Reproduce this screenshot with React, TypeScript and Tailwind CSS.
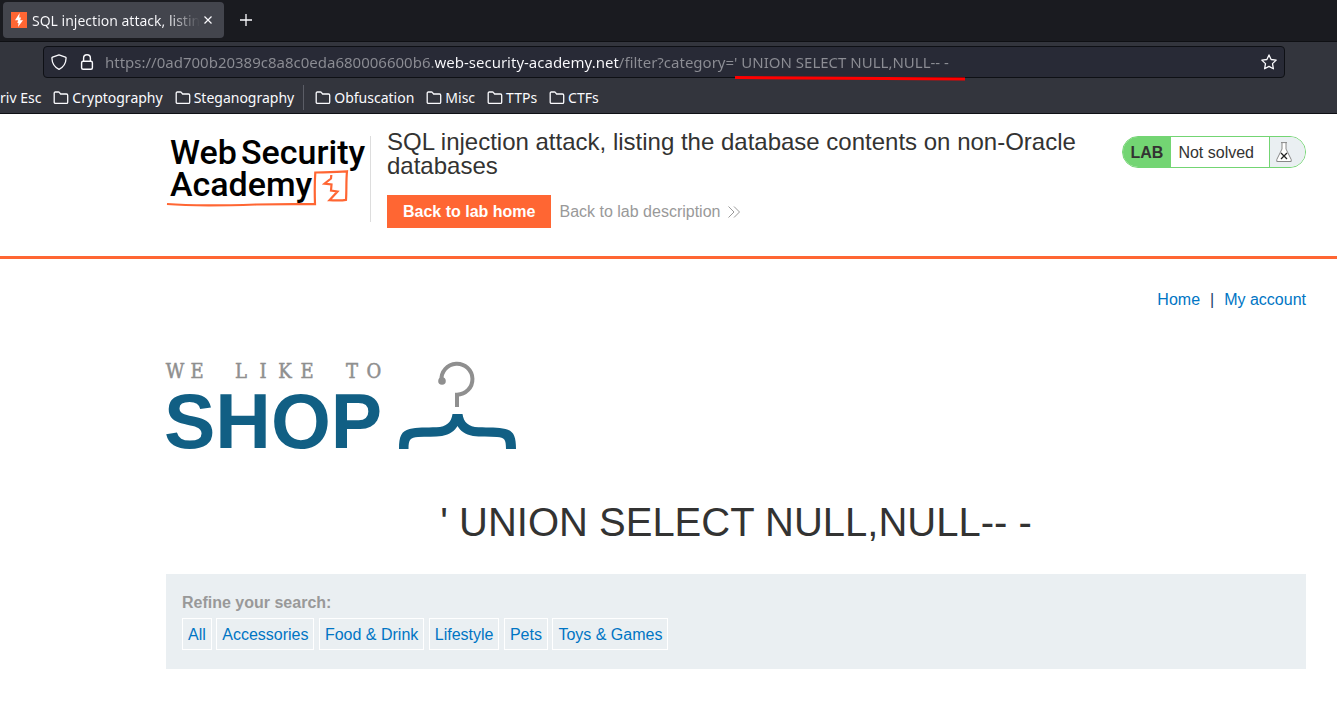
import React from "react";

const bookmarksLeft = ["Cryptography", "Steganography"];
const bookmarksRight = ["Obfuscation", "Misc", "TTPs", "CTFs"];
const categories = ["All", "Accessories", "Food & Drink", "Lifestyle", "Pets", "Toys & Games"];
const injection = "' UNION SELECT NULL,NULL-- -";

function FolderIcon() {
  return (
    <svg width="16" height="14" viewBox="0 0 16 14" fill="none" stroke="#fbfbfe" strokeWidth="1.3" aria-hidden="true">
      <path d="M1.200 11.200V2.200C1.200 1.500 1.600 1 2.300 1h3.100c.4 0 .7.1.9.4L7.600 3h5.900c.7 0 1.200.5 1.200 1.200v7c0 .7-.5 1.200-1.200 1.200H2.400c-.7 0-1.200-.5-1.200-1.200Z" strokeLinejoin="round" />
    </svg>
  );
}

function Bookmark({ label }: { label: string }) {
  return (
    <a href="#" className="flex items-center gap-[3px] whitespace-nowrap">
      <FolderIcon />
      {label}
    </a>
  );
}

function BrowserChrome() {
  return (
    <div className="bg-[#33353d] font-['Noto_Sans',sans-serif] text-[14px] text-[#fbfbfe]">
      <div className="flex h-[42px] items-center border-b border-[#0f1014] bg-[#1a1b20] pl-[3px] pb-px">
        <div className="flex h-9 w-[221px] items-center rounded bg-[#43454d] pl-2 pr-3">
          <svg width="16" height="16" viewBox="0 0 16 16" className="shrink-0" aria-hidden="true">
            <rect width="16" height="16" fill="#ff6633" />
            <path d="M8.700 1 4 8.300h3.200L6.300 11h1.200L7 15l5-6.800H9.200L10 5.500H8.200Z" fill="#fff" />
          </svg>
          <span className="ml-[5px] flex-1 overflow-hidden whitespace-nowrap bg-linear-to-r from-[#fbfbfe] from-80% to-transparent bg-clip-text text-transparent">
            SQL injection attack, listing
          </span>
          <button aria-label="Close tab" className="ml-1 flex size-2 items-center justify-center">
            <svg width="8" height="8" viewBox="0 0 8 8" stroke="#fbfbfe" strokeWidth="1.200">
              <path d="m.5.5 7 7M7.500.5l-7 7" />
            </svg>
          </button>
        </div>
        <button aria-label="New tab" className="ml-4 flex size-3 items-center justify-center">
          <svg width="12" height="12" viewBox="0 0 12 12" stroke="#fbfbfe" strokeWidth="1.300">
            <path d="M6 0v12M0 6h12" />
          </svg>
        </button>
      </div>

      <div className="pl-[43px] pr-[52px] pt-1">
        <div className="relative flex h-8 items-center rounded border border-[#0e1015] bg-[#282a36] px-[7px]">
          <svg width="16" height="16" viewBox="0 0 16 16" fill="none" stroke="#fbfbfe" strokeWidth="1.300" strokeLinejoin="round" className="shrink-0" aria-hidden="true">
            <path d="M8 .8 1.600 3.100c-.5.2-.7.5-.7 1C1.100 9.500 3.400 13.300 8 15.300c4.600-2 6.900-5.800 7.100-11.200 0-.5-.2-.8-.7-1Z" />
          </svg>
          <svg width="16" height="16" viewBox="0 0 16 16" fill="none" stroke="#fbfbfe" strokeWidth="1.400" className="ml-3 shrink-0" aria-hidden="true">
            <rect x="2.600" y="7.200" width="10.800" height="8" rx="1.500" />
            <path d="M4.600 7V4.100a3.400 3.400 0 0 1 6.800 0V7" />
          </svg>
          <input
            aria-label="Address"
            spellCheck={false}
            defaultValue={"https://0ad700b20389c8a8c0eda680006600b6.web-security-academy.net/filter?category=" + injection}
            className="ml-[10px] min-w-0 flex-1 bg-[linear-gradient(to_right,#8c8d94_330px,#fbfbfe_330px,#fbfbfe_514px,#8c8d94_514px)] bg-clip-text text-[15px] text-transparent outline-none"
          />
          <button aria-label="Bookmark this page" className="shrink-0">
            <svg width="16" height="16" viewBox="0 0 16 16" fill="none" stroke="#fbfbfe" strokeWidth="1.300" strokeLinejoin="round">
              <path d="m8 .9 2.100 4.600 5.100.6-3.700 3.500.9 5.200L8 12.400l-4.400 2.400.9-5.200L.8 6.100l5.100-.6Z" />
            </svg>
          </button>
          <svg width="232" height="6" viewBox="0 0 232 6" className="absolute left-[690px] top-[28px]" aria-hidden="true">
            <path d="M1 2.600 231 3.900" stroke="#ff0000" strokeWidth="3" />
          </svg>
        </div>
      </div>

      <nav className="flex h-9 items-center gap-3 overflow-hidden border-b border-[#0e1015] pt-1">
        <a href="#" className="whitespace-nowrap">riv Esc</a>
        {bookmarksLeft.map((b) => (
          <Bookmark key={b} label={b} />
        ))}
        <span className="-mx-[3px] h-[25px] w-px bg-[#5b5d66]" />
        <div className="flex items-center gap-3 pl-[2px]">
          {bookmarksRight.map((b) => (
            <Bookmark key={b} label={b} />
          ))}
        </div>
      </nav>
    </div>
  );
}

function AcademyLogo() {
  return (
    <svg width="204" height="80" viewBox="0 0 204 80" role="img" aria-label="Web Security Academy" className="shrink-0">
      <g fill="#000" fontFamily="Roboto, sans-serif" fontWeight="500" fontSize="34">
        <text x="4" y="28">Web</text>
        <text x="75" y="28">Security</text>
        <text x="4" y="60">Academy</text>
      </g>
      <path d="M1 67.500C30 70 60 69 90 68c20-.5 40-.6 59-.3C148.600 56 148.600 46 149.300 36c11-.3 21-.3 31.700-1.200-1 9-.3 19-1 28.500-5 1-11 .5-16.500.4l8-8.700-6.500-1 .5-6-7-.8 6.500-5.200.3-3.500" transform="translate(0 .5)" fill="none" stroke="#ff6633" strokeWidth="2.200" />
    </svg>
  );
}

function LabStatus() {
  return (
    <div className="flex h-8 shrink-0 items-stretch overflow-hidden rounded-full border border-[#73d573] text-[16px] leading-[32px]">
      <span className="bg-[#73d573] px-2 font-bold">LAB</span>
      <span className="border-r border-[#73d573] bg-white pl-[7px] pr-[15px]">Not solved</span>
      <span className="flex w-[35px] items-center bg-[#eaeff2] pl-[6px]">
        <svg width="16" height="20" viewBox="0 0 16 20" fill="#fff" stroke="#888" aria-hidden="true">
          <path d="M5 .6h6M6 .6V7L.8 17.500v2h14.400v-2L10 7V.6" />
          <path d="m5 11 6 6M11 11l-6 6" stroke="#222" strokeWidth="1.300" />
        </svg>
      </span>
    </div>
  );
}

function ShopLogo() {
  return (
    <svg width="352" height="92" viewBox="0 0 352 92" role="img" aria-label="We like to shop" className="block overflow-visible">
      <text
        x="9 31 53 75 97 119 141 163 186 208"
        y="20"
        textAnchor="middle"
        fontFamily="'DejaVu Serif Condensed', 'DejaVu Serif', serif"
        fontSize="20"
        fill="#8f8f8f"
        stroke="#8f8f8f"
        strokeWidth=".5"
      >
        WE LIKE TO
      </text>
      <text x="-2" y="90" fontFamily="'Liberation Sans', Arial, sans-serif" fontWeight="700" fontSize="77" fill="#115f84">
        SHOP
      </text>
      <g transform="translate(-.5 1)">
        <path d="M276 21.500a15.500 15.500 0 1 1 15.500 14.200V48" fill="none" stroke="#8f8f8f" strokeWidth="4" />
        <circle cx="276.500" cy="22" r="3.800" fill="#8f8f8f" />
        <path d="M287 55h10c1 8 6 13 16 13.300 10 .3 20 0 27 1.700 8 2 10.500 7 10.500 20H340.500c0-10-1.500-11.500-9-12-8-.5-17 .2-24-1-8-1.500-12.500-5-15.500-10-3 5-7.500 8.500-15.500 10-7 1.200-16 .5-24 1-7.500.5-9.500 2-9.500 12H233.500c0-13 2.500-18 10.500-20 7-1.700 17-1.400 27-1.700 10-.3 15-5.300 16-13.300Z" fill="#115f84" />
      </g>
    </svg>
  );
}

export default function App() {
  return (
    <div className="min-h-screen bg-white font-['Liberation_Sans',Arial,sans-serif] text-[16px] text-[#333332]">
      <BrowserChrome />

      <header className="flex min-h-[145px] items-start border-b-[3px] border-[#ff6633] pl-[166px] pr-[31px]">
        <div className="mt-[22px] h-[86px] w-[205px] shrink-0 border-r border-[#dddddd]">
          <AcademyLogo />
        </div>
        <div className="min-w-0 flex-1 pl-4 pr-9 pt-4">
          <h2 className="text-[24px] leading-[24px]">
            SQL injection attack, listing the database contents on non-Oracle databases
          </h2>
          <div className="mt-[17px] flex items-center gap-2">
            <a href="#" className="bg-[#ff6633] px-4 text-[16px] leading-[33px] font-bold text-white">
              Back to lab home
            </a>
            <a href="#" className="flex items-center gap-2 text-[#999999]">
              Back to lab description
              <svg width="12" height="12" viewBox="0 0 12 12" fill="none" stroke="#999" aria-hidden="true">
                <path d="m.5.5 5.500 5.500-5.500 5.500M6 .5 11.500 6 6 11.500" />
              </svg>
            </a>
          </div>
        </div>
        <div className="mt-[22px]">
          <LabStatus />
        </div>
      </header>

      <main className="pl-[166px] pr-[31px]">
        <nav className="flex justify-end gap-[10px] pt-[29px] leading-[24px] text-[#0075c4]">
          <a href="#">Home</a>
          <span className="text-[#1c3d66]">|</span>
          <a href="#">My account</a>
        </nav>
        <div className="pt-[46px]">
          <ShopLogo />
        </div>
        <h1 className="pt-12 text-center text-[40px] leading-[48px]">{injection}</h1>
        <section className="mt-7 bg-[#eaeff2] px-4 pt-[17px] pb-[19px]">
          <p className="leading-[24px] font-bold text-[#999999]">Refine your search:</p>
          <div className="mt-[3px]">
            {categories.map((c) => (
              <React.Fragment key={c}>
                <a href="#" className="inline-block border border-white px-[5px] pt-[2px] align-top leading-[28px] text-[#0075c4]">
                  {c}
                </a>{" "}
              </React.Fragment>
            ))}
          </div>
        </section>
      </main>
    </div>
  );
}
